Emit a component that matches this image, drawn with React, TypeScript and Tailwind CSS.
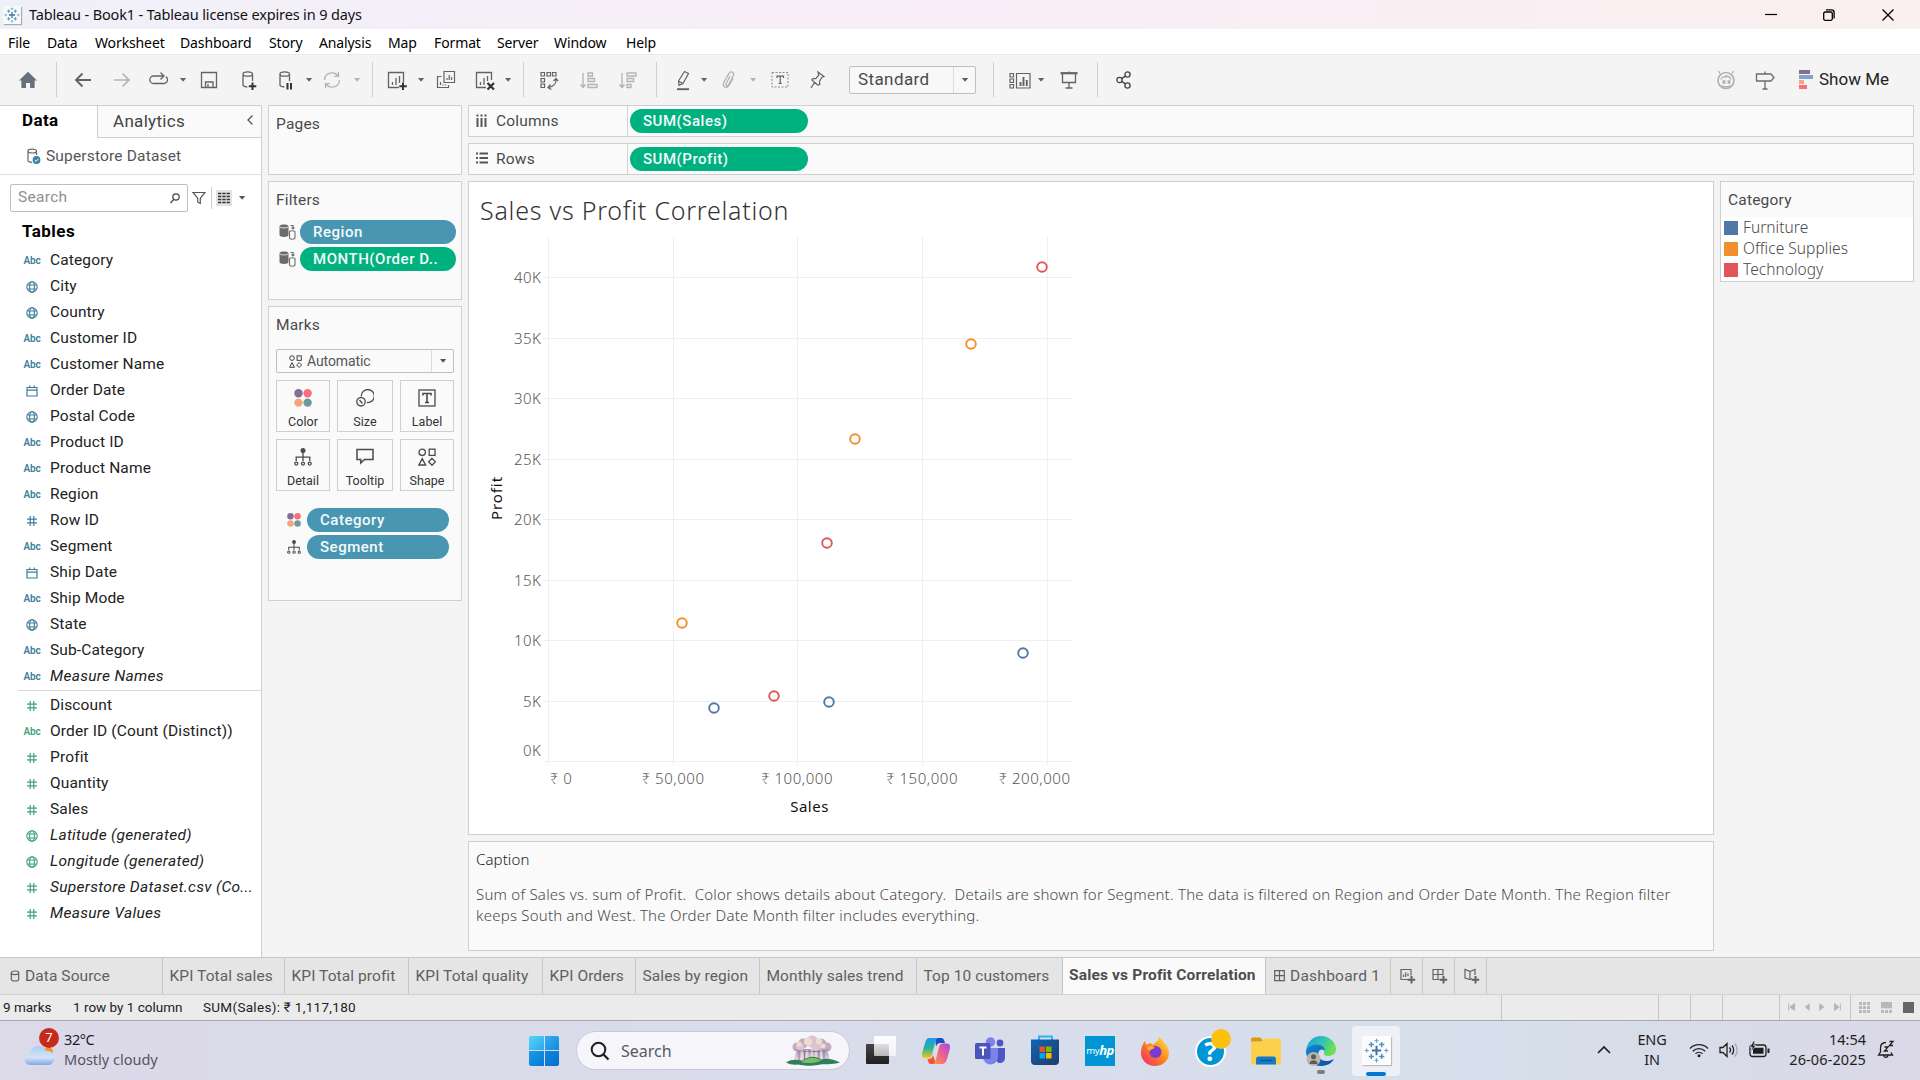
import type { ReactNode } from "react";
import clsx from "clsx";

const UI = "font-['Roboto','Liberation_Sans',sans-serif]";
const WIN = "font-['Noto_Sans','Open_Sans',sans-serif]";

/* ---------- small building blocks ---------- */

function Svg({ w, h = w, vb, className, children }: { w: number; h?: number; vb?: string; className?: string; children: ReactNode }) {
  return (
    <svg width={w} height={h} viewBox={vb ?? `0 0 ${w} ${h}`} fill="none" stroke="currentColor" strokeWidth="1.3" className={clsx("block shrink-0", className)}>
      {children}
    </svg>
  );
}

const Caret = ({ className }: { className?: string }) => (
  <Svg w={8} h={6} className={className}>
    <path d="M1 1h6.200L4.100 4.800z" fill="currentColor" stroke="none" />
  </Svg>
);

const Sep = ({ className }: { className: string }) => <div className={clsx("h-[35px] w-px shrink-0 bg-[#cfcfcf]", className)} />;

const FourDots = ({ size, className }: { size: number; className?: string }) => (
  <Svg w={size} vb="0 0 18 18" className={className}>
    <g stroke="none">
      <circle cx="4.5" cy="4.3" r="4.2" fill="#866d94" />
      <circle cx="13.6" cy="4.3" r="4.2" fill="#fa6e7c" />
      <circle cx="4.5" cy="13.6" r="4.2" fill="#f5a57c" />
      <circle cx="13.6" cy="13.6" r="4.2" fill="#6b99a4" />
    </g>
  </Svg>
);

const DetailIcon = ({ size, className }: { size: number; className?: string }) => (
  <Svg w={size} vb="0 0 18 18" className={className}>
    <circle cx="9" cy="2.6" r="2.5" fill="currentColor" stroke="none" />
    <path d="M9 3v10M2.2 13V9.2h13.6V13" />
    <circle cx="2.3" cy="15.6" r="1.5" />
    <circle cx="9" cy="15.6" r="1.5" />
    <circle cx="15.7" cy="15.6" r="1.5" />
  </Svg>
);

const ShapesIcon = ({ size, className }: { size: number; className?: string }) => (
  <Svg w={size} vb="0 0 18 18" className={className}>
    <circle cx="4.2" cy="4.3" r="3.2" />
    <rect x="11.2" y="1.2" width="5.8" height="6.2" />
    <path d="M4.2 10.6 7.6 17H.9zM14 10.4l3.4 3.4-3.4 3.5-3.4-3.5z" />
  </Svg>
);

const TableauMark = ({ size, className }: { size: number; className?: string }) => (
  <Svg w={size} vb="0 0 24 24" className={className}>
    <path d="M12 7.5v9M7.5 12h9" stroke="#3d74a5" strokeWidth="1.9" />
    <path d="M7 3.8v5M4.5 6.3h5M17 3.8v5M14.5 6.3h5M7 15.2v5M4.5 17.7h5M17 15.2v5M14.5 17.7h5" stroke="#4e93b8" strokeWidth="1.4" />
    <path d="M12 .6v4M10 2.6h4M12 19.4v4M10 21.4h4M2.6 10v4M.6 12h4M21.4 10v4M19.4 12h4" stroke="#6d9fc2" strokeWidth="1.1" />
  </Svg>
);

/* ---------- toolbar ---------- */

const tools: { id: string; ml: string; tone?: string; art?: ReactNode }[] = [
  { id: "home", ml: "ml-[17px]", tone: "text-[#66717d]", art: <path d="M11 2.8 20 11.4h-2.4V19h-4.5v-5H9v5H4.4v-7.6H2z" fill="currentColor" stroke="none" /> },
  { id: "sep", ml: "ml-[17px]" },
  { id: "back", ml: "ml-[15px]", art: <path d="M19 11H4M10.5 4.5 4 11l6.500 6.500" strokeWidth="1.9" /> },
  { id: "forward", ml: "ml-[17px]", tone: "text-[#b3b3b3]", art: <path d="M3 11h15M11.500 4.500 18 11l-6.500 6.500" strokeWidth="1.700" /> },
  { id: "redo", ml: "ml-[15px]", art: <path d="M15 7H5.500a3.500 3.500 0 0 0 0 7.500h10a3.600 3.600 0 0 0 4-3.700c0-1.500-.6-2.500-1.700-3.200M12.500 3.500 16 7l-3.500 3.500" /> },
  { id: "caret", ml: "ml-[9px]" },
  { id: "save", ml: "ml-[11px]", art: <path d="M3.500 3.500h15v15h-15zM7.500 18v-5h7.500v5M10 15v3" /> },
  { id: "add-source", ml: "ml-[17px]", art: <><path d="M15.500 12V5c0-1.300-2-2.200-4.800-2.200S6 3.700 6 5v11c0 1 1.700 1.700 4.300 2M6 5c0 1.300 2 2.200 4.700 2.200S15.500 6.300 15.500 5" /><path d="M15.500 13.500v7.500M11.800 17.200h7.500" strokeWidth="2" className="stroke-[#333]" /></> },
  { id: "pause-source", ml: "ml-[15px]", art: <><path d="M15.500 12V5c0-1.300-2-2.200-4.800-2.200S6 3.700 6 5v11c0 1 1.700 1.700 4.300 2M6 5c0 1.300 2 2.200 4.700 2.200S15.500 6.300 15.500 5" /><path d="M13.500 14v6.500M17 14v6.500" strokeWidth="2" className="stroke-[#333]" /></> },
  { id: "caret", ml: "ml-[9px]" },
  { id: "refresh", ml: "ml-[8px]", tone: "text-[#b3b3b3]", art: <path d="M3.500 11c0-4.300 3.300-7.200 7.500-7.200 2.500 0 4.500 1 6 3M18.500 11c0 4.300-3.300 7.200-7.500 7.200-2.500 0-4.500-1-6-3M17.500 3v4.300h-4.300M4.500 19v-4.300h4.300" /> },
  { id: "caret", ml: "ml-[10px]", tone: "text-[#b3b3b3]" },
  { id: "sep", ml: "ml-[11px]" },
  { id: "new-sheet", ml: "ml-[13px]", art: <><path d="M13 18.500H2.500v-15h15V13M6.500 16v-3M10 16V9M13.500 14V7" /><path d="M17 13.500v7.500M13.300 17.200h7.500" strokeWidth="2" className="stroke-[#333]" /></> },
  { id: "caret", ml: "ml-[9px]" },
  { id: "duplicate", ml: "ml-[10px]", art: <path d="M9 2.500h10.500v11H9zM12 11V9M14.200 11V6M16.500 11V8M6.500 7.500h-4v11h11V16M5.500 16v-3M8 16.500v-1M10.500 16.500v-1" strokeWidth="1.200" /> },
  { id: "clear", ml: "ml-[17px]", art: <><path d="M12 18.500H2.500v-15h15V11M6.500 16v-3M10 16V9M13.500 12V7" /><path d="M13.500 14l6.500 6.500M20 14l-6.500 6.500" strokeWidth="2.200" className="stroke-[#333]" /></> },
  { id: "caret", ml: "ml-[8px]" },
  { id: "sep", ml: "ml-[11px]" },
  { id: "swap", ml: "ml-[14px]", art: <path d="M3 3.500h3.500V7H3zM9 3.500h3.500V7H9zM14.500 3.500H18V7h-3.500zM3 9.500h3.500V13H3zM3 15h3.500v3.500H3zM18 10c.6 4-2 7.500-7.500 8.500M15.500 12 18 9.500l2.300 2.700M12.500 15.500 10 18.500l3.300 2" strokeWidth="1.200" /> },
  { id: "sort-asc", ml: "ml-[18px]", tone: "text-[#b3b3b3]", art: <path d="M5 4v14M2.500 15.500 5 18.500l2.500-3M10 4h4.500v3H10zM10 9.500h6.500v3H10zM10 15.500h9v3h-9z" strokeWidth="1.300" /> },
  { id: "sort-desc", ml: "ml-[17px]", tone: "text-[#b3b3b3]", art: <path d="M5 4v14M2.500 15.500 5 18.500l2.500-3M10 4h9v3h-9zM10 9.500h6.500v3H10zM10 15.500h4v3h-4z" strokeWidth="1.300" /> },
  { id: "sep", ml: "ml-[17px]" },
  { id: "highlight", ml: "ml-[15px]", art: <><path d="m6.500 12 6-9.500 4 2-5.500 10-4 1.800zM6.500 12l4.500 2.500" strokeWidth="1.200" /><path d="M5 20.200h12" strokeWidth="1.900" /></> },
  { id: "caret", ml: "ml-[6px]" },
  { id: "group", ml: "ml-[10px]", tone: "text-[#b3b3b3]", art: <path d="m12 7-4 8c-.6 1.700 1.300 2.700 2.300 1.200l5-9.500c1.400-3.500-2.500-5.200-4.300-2.300L6 13c-2.300 4.800 2.500 7.500 5 3.500l4-7" strokeWidth="1.300" /> },
  { id: "caret", ml: "ml-[9px]", tone: "text-[#b3b3b3]" },
  { id: "labels", ml: "ml-[12px]", art: <><rect x="3" y="3.500" width="16" height="14.500" strokeDasharray="2 1.500" strokeWidth="1" className="stroke-[#8a8a8a]" /><path d="M8 9V7.200h6.500V9M11.200 7.200v7M9.700 14.300h3" strokeWidth="1.200" /></> },
  { id: "pin", ml: "ml-[15px]", art: <path d="m12 3 6 4.500-2 .7-2.500 4 .3 3.300-2 .5-6-5 1-1.500 3 .2 3-3.700zM8.500 13.500 5 19" strokeWidth="1.200" /> },
];

function ToolItem({ id, ml, tone = "text-[#636363]", art }: { id: string; ml: string; tone?: string; art?: ReactNode }) {
  if (id === "sep") return <Sep className={ml} />;
  if (id === "caret") return <Caret className={clsx(ml, tone)} />;
  return <Svg w={22} className={clsx(ml, tone)}>{art}</Svg>;
}

function Toolbar() {
  return (
    <div className="flex h-[51px] shrink-0 items-center border-t border-[#ebebeb] bg-[#f4f4f4] pb-px">
      {tools.map((t, i) => <ToolItem key={i} {...t} />)}
      <div className="ml-[21px] flex h-[28px] w-[127px] shrink-0 items-center rounded-[2px] border border-[#bfbfbf] bg-[#f8f8f8]">
        <span className="w-[103px] pt-px pl-[8px] text-[17px] tracking-[0.4px] text-[#4a4a4a]">Standard</span>
        <div className="flex h-full flex-1 items-center justify-center border-l border-[#dcdcdc] text-[#595959]"><Caret /></div>
      </div>
      <Sep className="ml-[17px]" />
      <Svg w={22} className="ml-[15px] text-[#636363]">
        <path d="M1 4.500h3.500V8H1zM1 10h3.500v3.500H1zM1 15.500h3.500V19H1zM7.500 4.500h13.500V19H7.500z" strokeWidth="1.200" />
        <path d="M11.500 17v-4M14.500 17V8M17.800 17v-6" strokeWidth="1.900" />
      </Svg>
      <Caret className="ml-[6px] text-[#636363]" />
      <Svg w={22} className="ml-[13px] text-[#636363]">
        <path d="M2.500 4.200h17" strokeWidth="2.200" />
        <path d="M4.500 5v8.500h13V5M11 2.500v2M11 13.500V19M7.500 19h7" />
      </Svg>
      <Sep className="ml-[17px]" />
      <Svg w={22} className="ml-[15px] text-[#444]">
        <circle cx="6.500" cy="11" r="2.600" /><circle cx="14.500" cy="5.500" r="2.600" /><circle cx="14.500" cy="16.500" r="2.600" />
        <path d="m8.700 9.600 3.600-2.500M8.700 12.400l3.600 2.500" />
      </Svg>
      <Svg w={22} className="ml-auto text-[#b0b0b0]">
        <circle cx="11" cy="11.500" r="8" strokeWidth="1.700" />
        <path d="M5 4.500 3.500 2M17 4.500 18.500 2M6 10.500c1-2.500 3-3.500 5-2M16 10.500c-1-3-3-3.700-6-3.500M6.500 16.500c3 1.700 6 1.700 9 0" />
        <path d="M7.500 13h3M12.500 13h3" strokeWidth="3.400" />
      </Svg>
      <Svg w={22} className="ml-[17px] text-[#6b6b6b]">
        <path d="M2.500 5H17l3 3.500-3 3.500H2.500zM11 2.500V5M11 12v8M8.500 20h5" strokeWidth="1.300" />
      </Svg>
      <div className="ml-[23px] flex h-[19px] w-[14px] flex-col justify-between">
        <div className="h-[4px] w-[11px] bg-[#866d94]" />
        <div className="h-[4px] w-[14px] bg-[#7fa3cc]" />
        <div className="h-[4px] w-[5px] bg-[#f5a57c]" />
        <div className="h-[4px] w-[8px] bg-[#fa6e7c]" />
      </div>
      <span className="mr-[31px] ml-[6px] w-[70px] whitespace-nowrap text-[17px] text-[#222]">Show Me</span>
    </div>
  );
}

/* ---------- data pane ---------- */

type Kind = "abc" | "geo" | "date" | "num";
const dims: [Kind, string, boolean?][] = [
  ["abc", "Category"], ["geo", "City"], ["geo", "Country"], ["abc", "Customer ID"], ["abc", "Customer Name"],
  ["date", "Order Date"], ["geo", "Postal Code"], ["abc", "Product ID"], ["abc", "Product Name"], ["abc", "Region"],
  ["num", "Row ID"], ["abc", "Segment"], ["date", "Ship Date"], ["abc", "Ship Mode"], ["geo", "State"],
  ["abc", "Sub-Category"], ["abc", "Measure Names", true],
];
const measures: [Kind, string, boolean?][] = [
  ["num", "Discount"], ["abc", "Order ID (Count (Distinct))"], ["num", "Profit"], ["num", "Quantity"], ["num", "Sales"],
  ["geo", "Latitude (generated)", true], ["geo", "Longitude (generated)", true],
  ["num", "Superstore Dataset.csv (Co...", true], ["num", "Measure Values", true],
];

function KindIcon({ kind }: { kind: Kind }) {
  if (kind === "abc") return <span className="text-[10px] leading-none font-semibold tracking-[-0.1px]">Abc</span>;
  if (kind === "geo")
    return (
      <Svg w={12} className="-ml-px">
        <g strokeWidth="1.100"><circle cx="6" cy="6" r="5.200" /><ellipse cx="6" cy="6" rx="2.400" ry="5.200" /><path d="M1.500 4h9M1.500 8h9" /></g>
      </Svg>
    );
  if (kind === "date")
    return <Svg w={12}><path d="M1 2.500h10v8.500H1zM1 5.200h10M3.700.5v2M8.300.5v2" strokeWidth="1.200" /></Svg>;
  return <Svg w={12}><path d="M4.200 1v10M7.800 1v10M1 4.200h10M1 7.800h10" strokeWidth="1.200" /></Svg>;
}

function Field({ kind, name, italic, tone }: { kind: Kind; name: string; italic?: boolean; tone: string }) {
  return (
    <div className="flex h-[26px] items-center">
      <div className={clsx("flex w-[18px] justify-center pb-px", tone)}><KindIcon kind={kind} /></div>
      <span className={clsx("ml-[9px] whitespace-nowrap text-[15.5px] text-[#222]", italic ? "tracking-[0.3px] italic" : "tracking-[0.14px]")}>{name}</span>
    </div>
  );
}

function DataPane() {
  return (
    <div className="flex w-[262px] shrink-0 flex-col border-t border-r border-[#cfcfcf] bg-white">
      <div className="flex h-[32px] shrink-0">
        <div className="w-[97px] pt-[2px] pl-[22px] text-[17px] font-bold tracking-[0.4px] text-black">Data</div>
        <div className="flex flex-1 items-center justify-between border-b border-l border-[#cfcfcf] bg-[#fafafa] pr-[7px] pl-[15px]">
          <span className="pt-px text-[17px] tracking-[0.3px] text-[#444]">Analytics</span>
          <Svg w={8} h={12} className="-mt-[3px] text-[#555]"><path d="M6.500 1.500 2 6l4.500 4.500" /></Svg>
        </div>
      </div>
      <div className="flex h-[37px] shrink-0 items-center border-b border-[#e0e0e0] pl-[26px]">
        <Svg w={15} h={16} className="text-[#666]">
          <path d="M10.500 7V3c0-1-1.700-1.800-4.200-1.800S2 2 2 3v9.500c0 1 1.500 1.700 4 1.800M2 3c0 1.200 1.800 2 4.300 2s4.200-.8 4.200-2" strokeWidth="1.200" />
          <circle cx="10.500" cy="12" r="3.900" fill="#3b82a6" stroke="none" />
          <path d="m8.700 12 1.400 1.400 2.300-2.600" stroke="#fff" strokeWidth="1" />
        </Svg>
        <span className="ml-[5px] pt-px text-[15.5px] tracking-[0.17px] text-[#555]">Superstore Dataset</span>
      </div>
      <div className="mt-[9px] ml-[10px] flex h-[28px] shrink-0 items-center">
        <div className="flex h-full w-[178px] items-center justify-between rounded-[2px] border border-[#bfbfbf] pr-[7px] pl-[7px]">
          <span className="text-[15.5px] tracking-[0.3px] text-[#8f8f8f]">Search</span>
          <Svg w={10} h={11} className="text-[#444]"><circle cx="6" cy="4" r="3.200" strokeWidth="1.200" /><path d="M3.700 6.400.5 10" /></Svg>
        </div>
        <Svg w={14} className="ml-[4px] text-[#555]"><path d="M1 1.500h12L8.300 7.200v5.300L5.700 11V7.200z" strokeWidth="1.200" /></Svg>
        <div className="ml-[5px] h-[22px] w-px bg-[#cfcfcf]" />
        <div className="ml-[4px] flex size-[16px] items-center justify-center bg-[#e2e2e2]">
          <Svg w={12}><path d="M0 1.500h12M0 4.500h12M0 7.500h12M0 10.500h12" stroke="#333" strokeDasharray="3.300 1" /></Svg>
        </div>
        <Caret className="ml-[6px] text-[#555]" />
      </div>
      <div className="mt-[7px] h-[26px] shrink-0 pl-[22px] text-[17px] leading-[24px] font-bold tracking-[0.45px] text-black">Tables</div>
      <div className="mt-[3px] flex flex-col pl-[23px]">
        {dims.map(([k, n, it]) => <Field key={n} kind={k} name={n} italic={it} tone="text-[#3d7d9c]" />)}
      </div>
      <div className="mb-[2px] ml-[18px] h-px bg-[#d9d9d9]" />
      <div className="flex flex-col pl-[23px]">
        {measures.map(([k, n, it]) => <Field key={n} kind={k} name={n} italic={it} tone="text-[#3fa37c]" />)}
      </div>
    </div>
  );
}

/* ---------- shelves and cards ---------- */

const cardTitle = "text-[15.5px] tracking-[0.2px] text-[#4a4a4a]";

function Pill({ children, className }: { children: ReactNode; className: string }) {
  return (
    <div className={clsx("flex h-[24px] shrink-0 items-center overflow-hidden rounded-full text-[15px] font-medium tracking-[0.53px] whitespace-nowrap text-[#f4fafa]", className)}>
      {children}
    </div>
  );
}

function FilterRow({ label, className }: { label: string; className: string }) {
  return (
    <div className="flex items-center">
      <Svg w={17} h={16} className="text-[#6b6b6b]">
        <path d="M.5 2.500C.5 1.200 2.500.6 5 .6s4.500.6 4.500 1.900V11c0 1.300-2 2-4.500 2s-4.500-.7-4.500-2z" fill="currentColor" stroke="none" />
        <path d="M.8 3c1 1.300 7.400 1.300 8.400 0" stroke="#fafafa" strokeWidth=".8" />
        <path d="M10.500 8c0-.8 1.200-1.300 2.800-1.300s2.700.5 2.700 1.300v5.800c0 .9-1.200 1.400-2.700 1.400s-2.800-.5-2.800-1.400zM11.500 1.500h2.500v3M12.500 3.300 14 5l1.500-1.700" strokeWidth="1.100" />
      </Svg>
      <Pill className={clsx("ml-[4px] w-[156px] pl-[13px]", className)}>{label}</Pill>
    </div>
  );
}

const markCards: [string, ReactNode][] = [
  ["Color", <FourDots size={18} />],
  ["Size", <Svg w={18}><path d="M5.300 7.500A6.500 6.500 0 1 1 11 13.500" /><circle cx="5" cy="12.800" r="4.200" /><path d="m3.500 11 3 3.500" /></Svg>],
  ["Label", <Svg w={18}><rect x="1" y="1" width="16" height="16" /><path d="M5 6.500V4.500h8v2M9 4.500v9M7 13.500h4" strokeWidth="1.600" /></Svg>],
  ["Detail", <DetailIcon size={18} />],
  ["Tooltip", <Svg w={18}><path d="M1 1.500h16v10H8.500L4.800 15v-3.500H1z" strokeWidth="1.500" /></Svg>],
  ["Shape", <ShapesIcon size={18} />],
];

function ShelfColumn() {
  return (
    <div className="ml-[6px] flex w-[194px] shrink-0 flex-col gap-[6px]">
      <div className="h-[70px] border border-[#cfcfcf] bg-[#fafafa] pt-[7px] pl-[7px]"><div className={cardTitle}>Pages</div></div>
      <div className="h-[119px] border border-[#cfcfcf] bg-[#fafafa] pt-[7px] pl-[7px]">
        <div className={cardTitle}>Filters</div>
        <div className="mt-[8px] ml-[3px] flex flex-col gap-[3px]">
          <FilterRow label="Region" className="bg-[#4996b2]" />
          <FilterRow label="MONTH(Order D.." className="bg-[#00b180]" />
        </div>
      </div>
      <div className="h-[295px] border border-[#cfcfcf] bg-[#fafafa] pt-[7px] pr-[7px] pl-[7px]">
        <div className={cardTitle}>Marks</div>
        <div className="mt-[12px] flex h-[24px] items-center rounded-[2px] border border-[#bfbfbf] bg-[#fafafa]">
          <ShapesIcon size={13} className="ml-[12px] text-[#333]" />
          <span className="ml-[5px] w-[124px] text-[14px] tracking-[-0.1px] text-[#555]">Automatic</span>
          <div className="flex h-full flex-1 items-center justify-center border-l border-[#dcdcdc] text-[#555]"><Caret /></div>
        </div>
        <div className="mt-[7px] grid grid-cols-[54px_56px_54px] gap-[7px]">
          {markCards.map(([n, icon]) => (
            <div key={n} className="flex h-[52px] flex-col items-center border border-[#cfcfcf] pt-[8px] text-[#4a4a4a]">
              {icon}
              <span className="mt-[6px] text-[12.5px] leading-[18px] tracking-[0.05px] text-[#333]">{n}</span>
            </div>
          ))}
        </div>
        <div className="mt-[17px] ml-[11px] flex flex-col gap-[3px]">
          <div className="flex items-center"><FourDots size={14} /><Pill className="ml-[6px] w-[142px] bg-[#4996b2] pl-[13px]">Category</Pill></div>
          <div className="flex items-center"><DetailIcon size={14} className="text-[#4a4a4a]" /><Pill className="ml-[6px] w-[142px] bg-[#4996b2] pl-[13px]">Segment</Pill></div>
        </div>
      </div>
    </div>
  );
}

function Shelf({ icon, name, pill }: { icon: ReactNode; name: string; pill: string }) {
  return (
    <div className="flex h-[32px] shrink-0 items-center border border-[#cfcfcf] bg-[#fafafa]">
      <div className="flex h-full w-[159px] items-center border-r border-[#d4d4d4] pl-[7px] text-[#555]">
        {icon}
        <span className={clsx("ml-[9px] pt-[2px]", cardTitle)}>{name}</span>
      </div>
      <Pill className="-mt-px ml-[2px] w-[178px] bg-[#00b180] pt-px pl-[13px]">{pill}</Pill>
    </div>
  );
}

/* ---------- scatter plot ---------- */

const xLines = [548.5, 673.5, 797.5, 922.5, 1047.5];
const yTicks: [number, string, number][] = [
  [277.5, "40K", 277.5], [338.5, "35K", 338.5], [398.5, "30K", 398.5], [459.5, "25K", 459.5], [519.5, "20K", 519.5],
  [580.5, "15K", 580.5], [640.5, "10K", 640.5], [701.5, "5K", 701.5], [761.5, "0K", 750.5],
];
const xTicks: [number, string][] = [[561, "₹ 0"], [673, "₹ 50,000"], [797, "₹ 100,000"], [922, "₹ 150,000"], [1034.5, "₹ 200,000"]];
const points: [number, number, string][] = [
  [1042, 267, "#e15759"], [971, 344, "#f28e2b"], [855, 439, "#f28e2b"], [827, 543, "#e15759"], [682, 623, "#f28e2b"],
  [714, 708, "#4e79a7"], [774, 696, "#e15759"], [829, 702, "#4e79a7"], [1023, 653, "#4e79a7"],
];

function Scatter() {
  return (
    <svg width="620" height="600" viewBox="469 232 620 600" className="block font-['Noto_Sans','Open_Sans',sans-serif]">
      <g stroke="#efefef" strokeWidth="1">
        {xLines.map((x) => <path key={x} d={`M${x} 237V765`} />)}
        {yTicks.map(([y]) => <path key={y} d={`M543 ${y}H1073`} />)}
      </g>
      <g fontSize="15" fontWeight="300" fill="#555" letterSpacing="0.55">
        {yTicks.map(([, t, y]) => <text key={t} x="541.5" y={y + 5.5} textAnchor="end">{t}</text>)}
        {xTicks.map(([x, t]) => <text key={t} x={x} y="784" textAnchor="middle">{t}</text>)}
      </g>
      <g fontSize="15" fontWeight="400" fill="#111" letterSpacing="0.5" textAnchor="middle">
        <text x="809.500" y="812">Sales</text>
        <text transform="translate(502 498) rotate(-90)" letterSpacing="0.9">Profit</text>
      </g>
      {points.map(([x, y, c]) => <circle key={x} cx={x} cy={y} r="4.800" fill="none" stroke={c} strokeWidth="1.900" />)}
    </svg>
  );
}

function Worksheet() {
  return (
    <div className="mr-[6px] ml-[6px] flex flex-1 flex-col">
      <Shelf name="Columns" pill="SUM(Sales)" icon={<Svg w={11} h={13} className="-mt-[2px]"><path d="M1.500 4v9M5.500 4v9M9.500 4v9M1.500.5v2M5.500.5v2M9.500.5v2" strokeWidth="2" /></Svg>} />
      <div className="h-[6px]" />
      <Shelf name="Rows" pill="SUM(Profit)" icon={<Svg w={12} h={12} className="-mt-[2px] -mr-px"><path d="M3.500 1.500H12M3.500 6H12M3.500 10.500H12M0 1.500h2M0 6h2M0 10.500h2" strokeWidth="2" /></Svg>} />
      <div className="mt-[6px] flex flex-1 gap-[6px]">
        <div className="flex w-[1246px] flex-col">
          <div className={clsx("h-[654px] shrink-0 border border-[#cfcfcf] bg-white", WIN)}>
            <div className="h-[50px] pt-[9px] pl-[11px] text-[25px] leading-[38px] font-light tracking-[0.76px] text-[#333]">Sales vs Profit Correlation</div>
            <Scatter />
          </div>
          <div className={clsx("mt-[6px] h-[110px] shrink-0 border border-[#cfcfcf] bg-[#fafafa] pl-[7px]", WIN)}>
            <div className="pt-[6px] text-[15px] leading-[22px] font-[350] tracking-[0.1px] text-[#222]">Caption</div>
            <div className="mt-[14px] text-[15px] leading-[21px] font-light tracking-[0.23px] whitespace-pre text-[#4a4a4a]">
              {"Sum of Sales vs. sum of Profit.  Color shows details about Category.  Details are shown for Segment. The data is filtered on Region and Order Date Month. The Region filter\nkeeps South and West. The Order Date Month filter includes everything."}
            </div>
          </div>
        </div>
        <div className="h-[101px] w-[194px] border border-[#cfcfcf] bg-white">
          <div className={clsx("h-[35px] bg-[#fafafa] pt-[7px] pl-[7px]", cardTitle)}>Category</div>
          <div className={clsx("flex flex-col", WIN)}>
            {([["Furniture", "bg-[#4e79a7]"], ["Office Supplies", "bg-[#f28e2b]"], ["Technology", "bg-[#e15759]"]] as const).map(([n, c]) => (
              <div key={n} className="flex h-[21px] items-center pl-[3px]">
                <div className={clsx("size-[14px]", c)} />
                <span className="ml-[5px] text-[15.5px] font-light tracking-[0.04px] text-[#4a4a4a]">{n}</span>
              </div>
            ))}
          </div>
        </div>
      </div>
    </div>
  );
}

/* ---------- sheet tabs and status bar ---------- */

const tabs: [string, string][] = [
  ["KPI Total sales", "w-[122px]"], ["KPI Total profit", "w-[124px]"], ["KPI Total quality", "w-[134px]"], ["KPI Orders", "w-[93px]"],
  ["Sales by region", "w-[124px]"], ["Monthly sales trend", "w-[157px]"], ["Top 10 customers", "w-[146px]"],
];

function SheetTabs() {
  const tab = "flex h-full shrink-0 items-center border-r border-[#c6c6c6] whitespace-nowrap";
  return (
    <div className="flex h-[37px] shrink-0 items-center border-t border-[#c6c6c6] bg-[#e5e5e5] text-[15.5px] tracking-[0.08px] text-[#606060]">
      <div className={clsx(tab, "w-[163px] pt-[2px] pl-[10px]")}>
        <Svg w={10} h={12} className="-mt-[3px]"><path d="M1.300 2.800C1.300 1.700 2.800 1 5 1s3.700.7 3.700 1.800v6.400C8.700 10.300 7.200 11 5 11s-3.700-.7-3.700-1.800zM1.300 3.200C1.600 4.300 3 4.600 5 4.600s3.400-.3 3.700-1.400" strokeWidth="1.200" /></Svg>
        <span className="ml-[5px]">Data Source</span>
      </div>
      {tabs.map(([n, w]) => <div key={n} className={clsx(tab, w, "pt-[2px] pl-[6.5px]")}>{n}</div>)}
      <div className={clsx(tab, "w-[203px] bg-[#fafafa] pl-[6px] font-bold tracking-[0.16px] text-[#4d4d4d]")}>Sales vs Profit Correlation</div>
      <div className={clsx(tab, "w-[125px] pt-[2px] pl-[8px]")}>
        <Svg w={11} h={12} className="-mt-[3px]"><path d="M.7.700h9.600v10H.7zM5.500.700v10M.7 5.700h9.600" strokeWidth="1.200" /></Svg>
        <span className="ml-[5px] tracking-[0.25px]">Dashboard 1</span>
      </div>
      {[
        <path key="a" d="M8.500 11.500H1v-10h10v6M3.500 9V6.500M5.700 9V4.500M8 8V5.500" strokeWidth="1.200" />,
        <path key="b" d="M7.500 11.500H1v-10h10v6M6 1.500v10M1 6.500h10" strokeWidth="1.200" />,
        <path key="c" d="M6 3.500v8L1 10V1.500zM6 3.500l5-2V7M6 11.500l2-.7" strokeWidth="1.200" />,
      ].map((p, i) => (
        <div key={i} className={clsx(tab, "w-[32px] justify-center pl-[2px]")}>
          <Svg w={16} className="text-[#636363]">{p}<path d="M11.500 8v7.500M7.700 11.800h7.500" strokeWidth="2" /></Svg>
        </div>
      ))}
    </div>
  );
}

function StatusBar() {
  const cell = "h-full shrink-0 border-l border-[#c6c6c6]";
  return (
    <div className="flex h-[27px] shrink-0 items-center border-t border-b border-t-[#d2d2d2] border-b-[#a9a9b3] bg-[#ebebeb] text-[13.5px] whitespace-nowrap text-[#222]">
      <span className="ml-[3px] w-[70px]">9 marks</span>
      <span className="w-[130px]">1 row by 1 column</span>
      <span className="flex-1 tracking-[0.3px]">SUM(Sales): ₹ 1,117,180</span>
      <div className={clsx(cell, "w-[157px]")} />
      <div className={clsx(cell, "w-[32px]")} />
      <div className={clsx(cell, "w-[32px]")} />
      <div className={clsx(cell, "w-[57px]")} />
      <div className={clsx(cell, "flex w-[71px] items-center gap-[9px] pb-px pl-[8px] text-[#b5b5b5]")}>
        <Svg w={7} h={8}><path d="M.7.500v7M6.500.500v7L2 4z" strokeWidth="1" fill="currentColor" /></Svg>
        <Svg w={6} h={8}><path d="M5.500.500v7L1 4z" strokeWidth=".5" fill="currentColor" /></Svg>
        <Svg w={6} h={8}><path d="M.5.500v7L5 4z" strokeWidth=".5" fill="currentColor" /></Svg>
        <Svg w={7} h={8}><path d="M6.300.500v7M.5.500v7L5 4z" strokeWidth="1" fill="currentColor" /></Svg>
      </div>
      <div className={clsx(cell, "flex w-[70px] items-center gap-[11px] pl-[8px] text-[#b8b8b8]")}>
        <Svg w={11}><path d="M0 1.500h11M0 5.500h11M0 9.500h11" strokeWidth="3" strokeDasharray="3 1" /></Svg>
        <Svg w={11}><path d="M0 3.200h11" strokeWidth="6.400" /><path d="M0 9.500h11" strokeWidth="3" strokeDasharray="3 1" /></Svg>
        <div className="size-[11px] bg-[#666]" />
      </div>
    </div>
  );
}

/* ---------- Windows taskbar ---------- */

function SearchHighlight() {
  return (
    <Svg w={54} h={32}>
      <defs>
        <linearGradient id="rain" x1="0" y1="0" x2="0" y2="1"><stop offset="0" stopColor="#a58fae" /><stop offset="1" stopColor="#eadbe6" /></linearGradient>
      </defs>
      <g stroke="none">
        <path d="M11 14h30l3 11H8z" fill="url(#rain)" />
        <path d="M16 14v12M21 15v8M26 14v12M30 15v8M35 14v12" stroke="#f3dfe6" strokeWidth="1.400" />
        <path d="M13 15v10M18.500 15v11M33 15v11M38 15v9" stroke="#8a7ba0" strokeWidth="1" />
        <g fill="#c2abc8">
          <circle cx="11" cy="12" r="4.500" /><circle cx="41" cy="12" r="4.500" /><circle cx="35" cy="9" r="5.500" /><circle cx="17" cy="8.500" r="5" />
        </g>
        <g fill="#dcc3cd"><circle cx="26" cy="6.500" r="6" /><circle cx="30" cy="11" r="5" /><circle cx="14" cy="12" r="4" /></g>
        <g fill="#f1dccb"><circle cx="22" cy="6.500" r="4" /><circle cx="33" cy="6.500" r="3" /><circle cx="13" cy="9" r="2.500" /><circle cx="37" cy="11" r="2.500" /></g>
        <path d="M9 14c8 3 26 3 34 0-2 4-32 4-34 0z" fill="#85759b" />
        <path d="M0 27.500c5-3.500 11-3 16-2 6-4.500 14-5 19-1 6-2 13 0 19 3-8 2.500-16 1-22 2.500-8 1.500-15 .5-20-.5-4 .5-8 0-12-2z" fill="#2f7f5c" />
        <path d="M15 27c5-5 14-6 20-1.500-4 2.500-14 3.500-20 1.500z" fill="#79bf63" />
      </g>
    </Svg>
  );
}

function Taskbar() {
  return (
    <div className={clsx("flex h-[59px] shrink-0 items-center bg-linear-to-r from-[#dcd9e9] via-[#d6dfeb] via-[78%] to-[#dbd8e7] text-[14.5px] text-[#1f1f1f]", WIN)}>
      <div className="relative ml-[24px] h-[46px] w-[36px] shrink-0">
        <Svg w={32} h={40} className="mt-[2px]">
          <defs><linearGradient id="cloud" x1="0" y1="0" x2="0" y2="1"><stop offset="0" stopColor="#a9cdf6" /><stop offset=".6" stopColor="#d5e4f8" /><stop offset="1" stopColor="#7fa9e0" /></linearGradient></defs>
          <circle cx="24" cy="22" r="5" fill="#f7941d" stroke="none" />
          <path d="M7 35a6 6 0 0 1-.6-12A8.500 8.500 0 0 1 22.500 21a7 7 0 0 1 2.200 14z" fill="url(#cloud)" stroke="none" />
        </Svg>
        <div className="absolute top-0 left-[15px] flex size-[20px] items-center justify-center rounded-full bg-[#c42b1c] text-[13px] text-white">7</div>
      </div>
      <div className="ml-[4px] w-[465px] shrink-0 pb-[4px] leading-[20px] whitespace-nowrap">
        <div className="tracking-[-0.4px]">32°C</div>
        <div className="text-[#55545c]">Mostly cloudy</div>
      </div>

      <div className="grid size-[30px] shrink-0 grid-cols-2 gap-px">
        <div className="rounded-tl-[2px] bg-linear-to-br from-[#56d4fb] to-[#2ba7ec]" />
        <div className="rounded-tr-[2px] bg-linear-to-br from-[#34aeef] to-[#0f8ade]" />
        <div className="rounded-bl-[2px] bg-linear-to-br from-[#1c9be6] to-[#0678d4]" />
        <div className="rounded-br-[2px] bg-linear-to-br from-[#0f87dd] to-[#0670cc]" />
      </div>

      <div className="ml-[17px] flex h-[39px] w-[274px] shrink-0 items-center rounded-full border border-[#c8c8dc] bg-[#f5f5fa] pl-[13px]">
        <Svg w={20} className="text-[#1f1f1f]"><circle cx="8.500" cy="8.500" r="6.800" strokeWidth="2" /><path d="m13.500 13.500 5 5" strokeWidth="2.300" /></Svg>
        <span className="ml-[11px] w-[165px] text-[16px] text-[#5a5a60]">Search</span>
        <SearchHighlight />
      </div>

      <div className="relative ml-[16px] size-[30px] shrink-0">
        <div className="absolute bottom-[2px] left-0 h-[20px] w-[23px] rounded-[1px] bg-linear-to-b from-[#454545] to-[#202020]" />
        <div className="absolute top-0 right-0 h-[20px] w-[22px] rounded-[1px] bg-linear-to-b from-white/95 to-white/65" />
      </div>

      <Svg w={30} className="ml-[25px]">
        <defs>
          <linearGradient id="cpA" x1="0" y1="0" x2="0" y2="1"><stop offset="0" stopColor="#1b9af0" /><stop offset=".5" stopColor="#26b39a" /><stop offset="1" stopColor="#f5c51c" /></linearGradient>
          <linearGradient id="cpB" x1="1" y1="0" x2="0" y2="1"><stop offset="0" stopColor="#a24be0" /><stop offset=".5" stopColor="#f0608e" /><stop offset="1" stopColor="#ff9a3c" /></linearGradient>
        </defs>
        <g stroke="none">
          <path d="M14 2h6c2.500 0 3 1.500 4 5h-5c-2 0-3 1-4 4z" fill="#1a4fc4" />
          <path d="M8 2h9c-2 1-2.500 3-3.500 7L11 19c-.8 2.500-2 3-4 3H4c-3 0-3.500-2.500-2.700-5.500L4 7c1-3.500 2-5 4-5z" fill="url(#cpA)" />
          <path d="M15 28H10c-2 0-2.800-1.500-3.500-5 3 .3 4.500-.5 5.500-4z" fill="#f2533a" />
          <path d="M21 28h-9c2-1 2.500-3 3.500-7L18 11c.8-2.500 2-3.500 4-3.500h4c3 0 3.500 3 2.700 6L26 23c-1 3.500-2.500 5-5 5z" fill="url(#cpB)" />
        </g>
      </Svg>

      <Svg w={30} className="ml-[24px]">
        <g stroke="none">
          <circle cx="25" cy="7" r="3.400" fill="#4f55c4" /><path d="M20 12h10v10a5 5 0 0 1-8 4z" fill="#4f55c4" />
          <circle cx="15.500" cy="6" r="4.700" fill="#7b83eb" /><path d="M8 12h15v9a7.500 7.500 0 0 1-15 0z" fill="#7b83eb" />
          <rect x="0" y="7" width="15.500" height="16" rx="1.500" fill="#4b53bc" />
        </g>
        <path d="M4.500 11.500h7M8 11.500v8" stroke="#fff" strokeWidth="2" />
      </Svg>

      <Svg w={30} h={32} className="-mt-[2px] ml-[25px]">
        <path d="M9 6V2.500h13V6" stroke="#2bb5f5" strokeWidth="2" />
        <defs><linearGradient id="store" x1="0" y1="0" x2="1" y2="1"><stop offset="0" stopColor="#0f66b8" /><stop offset="1" stopColor="#223a66" /></linearGradient></defs>
        <path d="M1 5.500h28V27a4 4 0 0 1-4 4H5a4 4 0 0 1-4-4z" fill="url(#store)" stroke="none" />
        <g stroke="none"><path d="M9.500 12.500H15V18H9.500z" fill="#f25022" /><path d="M16 12.500h5.500V18H16z" fill="#7fba00" /><path d="M9.500 19H15v5.500H9.500z" fill="#00a4ef" /><path d="M16 19h5.500v5.500H16z" fill="#ffb900" /></g>
      </Svg>

      <div className="ml-[25px] flex size-[30px] shrink-0 items-center justify-center bg-[#0096d6] text-[9.500px] leading-none tracking-[-0.3px] text-white">
        my<span className="text-[13px] font-bold tracking-[-0.5px] italic">hp</span>
      </div>

      <Svg w={30} className="ml-[25px]">
        <defs><linearGradient id="fx" x1="1" y1="0" x2="0" y2="1"><stop offset="0" stopColor="#fff04a" /><stop offset=".45" stopColor="#ff8a1e" /><stop offset="1" stopColor="#f0206e" /></linearGradient></defs>
        <g stroke="none">
          <path d="M19 1c3 2 4 4 5 6 3 2 5 6 5 10a14 13 0 0 1-28 0c0-5 1.500-9 4-12l1 4 4-2c2 1 3 2 4 1 2-2 5-4 5-7z" fill="url(#fx)" />
          <circle cx="15.500" cy="16" r="6" fill="#7a3bd0" />
          <path d="M7 11c3-2 6-1 8 1-2 1-4 1-5 3-2-1-3-2-3-4z" fill="#ffb02e" />
        </g>
      </Svg>

      <div className="relative ml-[25px] h-[44px] w-[38px] shrink-0">
        <div className="absolute top-[7px] left-0 flex size-[31px] items-center justify-center rounded-full border-2 border-white bg-[#0096d6] text-[26px] leading-none font-bold text-white">?</div>
        <div className="absolute top-0 right-[2px] size-[20px] rounded-full bg-[#fdc00f]" />
      </div>

      <Svg w={30} h={28} className="ml-[18px]">
        <g stroke="none">
          <path d="M0 2a1.500 1.500 0 0 1 1.500-1.500H9l4 4H0z" fill="#dc9a0a" />
          <path d="M0 5h10l3-3.500h15.500A1.500 1.500 0 0 1 30 3v23a1.500 1.500 0 0 1-1.500 1.500h-27A1.500 1.500 0 0 1 0 26z" fill="#fdcf4a" />
          <path d="M5 27.500V22a2.500 2.500 0 0 1 2.500-2.500h15A2.500 2.500 0 0 1 25 22v5.500z" fill="#1479c9" />
          <path d="M9 23.500h12" stroke="#0c4f8d" strokeWidth="1.200" />
        </g>
      </Svg>

      <div className="relative ml-[25px] flex h-full w-[30px] shrink-0 items-center">
        <Svg w={30}>
          <defs>
            <linearGradient id="edgeA" x1="0" y1="0" x2="1" y2=".4"><stop offset="0" stopColor="#1ba2dd" /><stop offset=".6" stopColor="#35c3b5" /><stop offset="1" stopColor="#6fe04f" /></linearGradient>
            <linearGradient id="edgeB" x1="0" y1="0" x2="1" y2="1"><stop offset="0" stopColor="#1287d8" /><stop offset="1" stopColor="#0b4b9c" /></linearGradient>
          </defs>
          <g stroke="none">
            <path d="M0 15C1 6 7 0 15 0s15 6 15 13c0 5-4 7-8 7-3 0-4.500-1.500-4-3 1-3-.5-6-5-6C7 11 2 12 0 15z" fill="url(#edgeA)" />
            <path d="M0 15c2-5 7-7 13-6 4 .5 6 3 5.500 6-1-1.500-3-2-4.500-1-3 2-2 8 2 10 4 2 8 1 12-1-3 5-8 7-13 7C6 30 0 23 0 15z" fill="url(#edgeB)" />
            <circle cx="7.500" cy="23" r="7" fill="#b9b5ae" /><circle cx="7.500" cy="20.800" r="2.500" fill="#5d5a56" /><path d="M3.500 28c0-5 8-5 8 0z" fill="#5d5a56" />
          </g>
        </Svg>
        <div className="absolute bottom-[6px] left-[11px] h-[4px] w-[8px] rounded-full bg-[#7b7d85]" />
      </div>

      <div className="relative ml-[16px] flex h-[50px] w-[48px] shrink-0 items-center justify-center rounded-[4px] bg-[#edf0f7]">
        <div className="flex size-[29px] items-center justify-center bg-[#fcfcfc] shadow-[1px_1px_1px_#bbb]"><TableauMark size={25} /></div>
        <div className="absolute bottom-0 left-[14px] h-[4px] w-[20px] rounded-full bg-[#0078d4]" />
      </div>

      <div className="ml-auto flex shrink-0 items-center pb-[2px]">
        <Svg w={14} h={9}><path d="M1 8l6-6 6 6" strokeWidth="1.700" /></Svg>
        <div className="ml-[26px] w-[30px] pb-[2px] text-center leading-[20px] tracking-[-0.2px]"><div>ENG</div><div>IN</div></div>
        <Svg w={20} h={16} className="ml-[22px]">
          <path d="M1 6.500a12.500 12.500 0 0 1 18 0M3.800 9.200a8.800 8.800 0 0 1 12.400 0M6.500 11.800a5 5 0 0 1 7 0" />
          <circle cx="10" cy="13.700" r="1.500" fill="currentColor" stroke="none" />
        </Svg>
        <Svg w={20} h={16} className="ml-[10px]">
          <path d="M1 5.500h3l4-4v13l-4-4H1zM10.500 5.500c1.200 1.400 1.200 3.600 0 5M13 3.500c2.200 2.500 2.200 6.500 0 9" strokeWidth="1.300" />
          <path d="M15.800 1.500c3 3.500 3 9.500 0 13" stroke="#a9a9b5" strokeWidth="1.300" />
        </Svg>
        <Svg w={21} h={17} className="ml-[10px]">
          <rect x="1" y="4" width="16" height="11.500" rx="2.500" />
          <path d="M4 6.800h10.500v6H4zM18.500 7.500v4.500h2V7.500z" fill="currentColor" stroke="none" />
          <path d="M4.500 0 1 6.200h2.200L2 10.500 7 4.500H4.700L6 0z" fill="currentColor" stroke="#d8d9e6" strokeWidth=".7" />
        </Svg>
        <div className="ml-[16px] w-[80px] pb-[2px] text-right leading-[20px] whitespace-nowrap"><div>14:54</div><div className="tracking-[0.1px]">26-06-2025</div></div>
        <Svg w={18} h={19} className="mr-[25px] ml-[11px]">
          <path d="M9 2.500C5.500 2.500 3.500 4.500 3.500 8v4l-2 3h14l-1.500-2.500M6.500 15.500c.4 2.300 4 2.300 4.500 0" />
          <path d="M7.500 7h3.500l-3.500 4H11M12.500 1.500H16L12.500 5.500H16" strokeWidth="1.300" />
        </Svg>
      </div>
    </div>
  );
}

/* ---------- window chrome ---------- */

const menu: [string, string][] = [
  ["File", "w-[39px]"], ["Data", "w-[48px]"], ["Worksheet", "w-[85px]"], ["Dashboard", "w-[89px]"], ["Story", "w-[50px]"], ["Analysis", "w-[69px]"],
  ["Map", "w-[46px]"], ["Format", "w-[63px]"], ["Server", "w-[57px]"], ["Window", "w-[72px]"], ["Help", "w-[40px]"],
];

export default function App() {
  return (
    <div className={clsx("flex h-[1080px] w-[1920px] flex-col overflow-hidden bg-[#f4f4f4]", UI)}>
      <div className={clsx("flex h-[29px] shrink-0 items-center bg-linear-to-r from-[#f0f0f8] via-[#f9eef7] via-50% to-[#faf0ef] text-black", WIN)}>
        <div className="ml-[3px] flex size-[18px] items-center justify-center bg-[#f7f9fb] shadow-[1px_1px_1px_#aaa]"><TableauMark size={16} /></div>
        <span className="ml-[8px] flex-1 text-[14.5px] tracking-[-0.15px] text-[#111]">Tableau - Book1 - Tableau license expires in 9 days</span>
        <Svg w={12} className="mr-[46px]"><path d="M0 5.500h12" strokeWidth="1.200" /></Svg>
        <Svg w={12} className="mr-[47px]"><rect x=".7" y="3" width="8.600" height="8.300" rx="1.500" strokeWidth="1.300" /><path d="M3 .9h5.500a2.600 2.600 0 0 1 2.600 2.600v6" strokeWidth="1.300" /></Svg>
        <Svg w={12} className="mr-[26px]"><path d="m.5.500 11 11M11.500.500l-11 11" strokeWidth="1.300" /></Svg>
      </div>
      <div className={clsx("flex h-[25px] shrink-0 items-center bg-white pt-px pl-[8px] text-[14px] tracking-[-0.12px] text-black", WIN)}>
        {menu.map(([m, w]) => <span key={m} className={w}>{m}</span>)}
      </div>
      <Toolbar />
      <div className="flex h-[852px] shrink-0 overflow-hidden">
        <DataPane />
        <ShelfColumn />
        <Worksheet />
      </div>
      <SheetTabs />
      <StatusBar />
      <Taskbar />
    </div>
  );
}
